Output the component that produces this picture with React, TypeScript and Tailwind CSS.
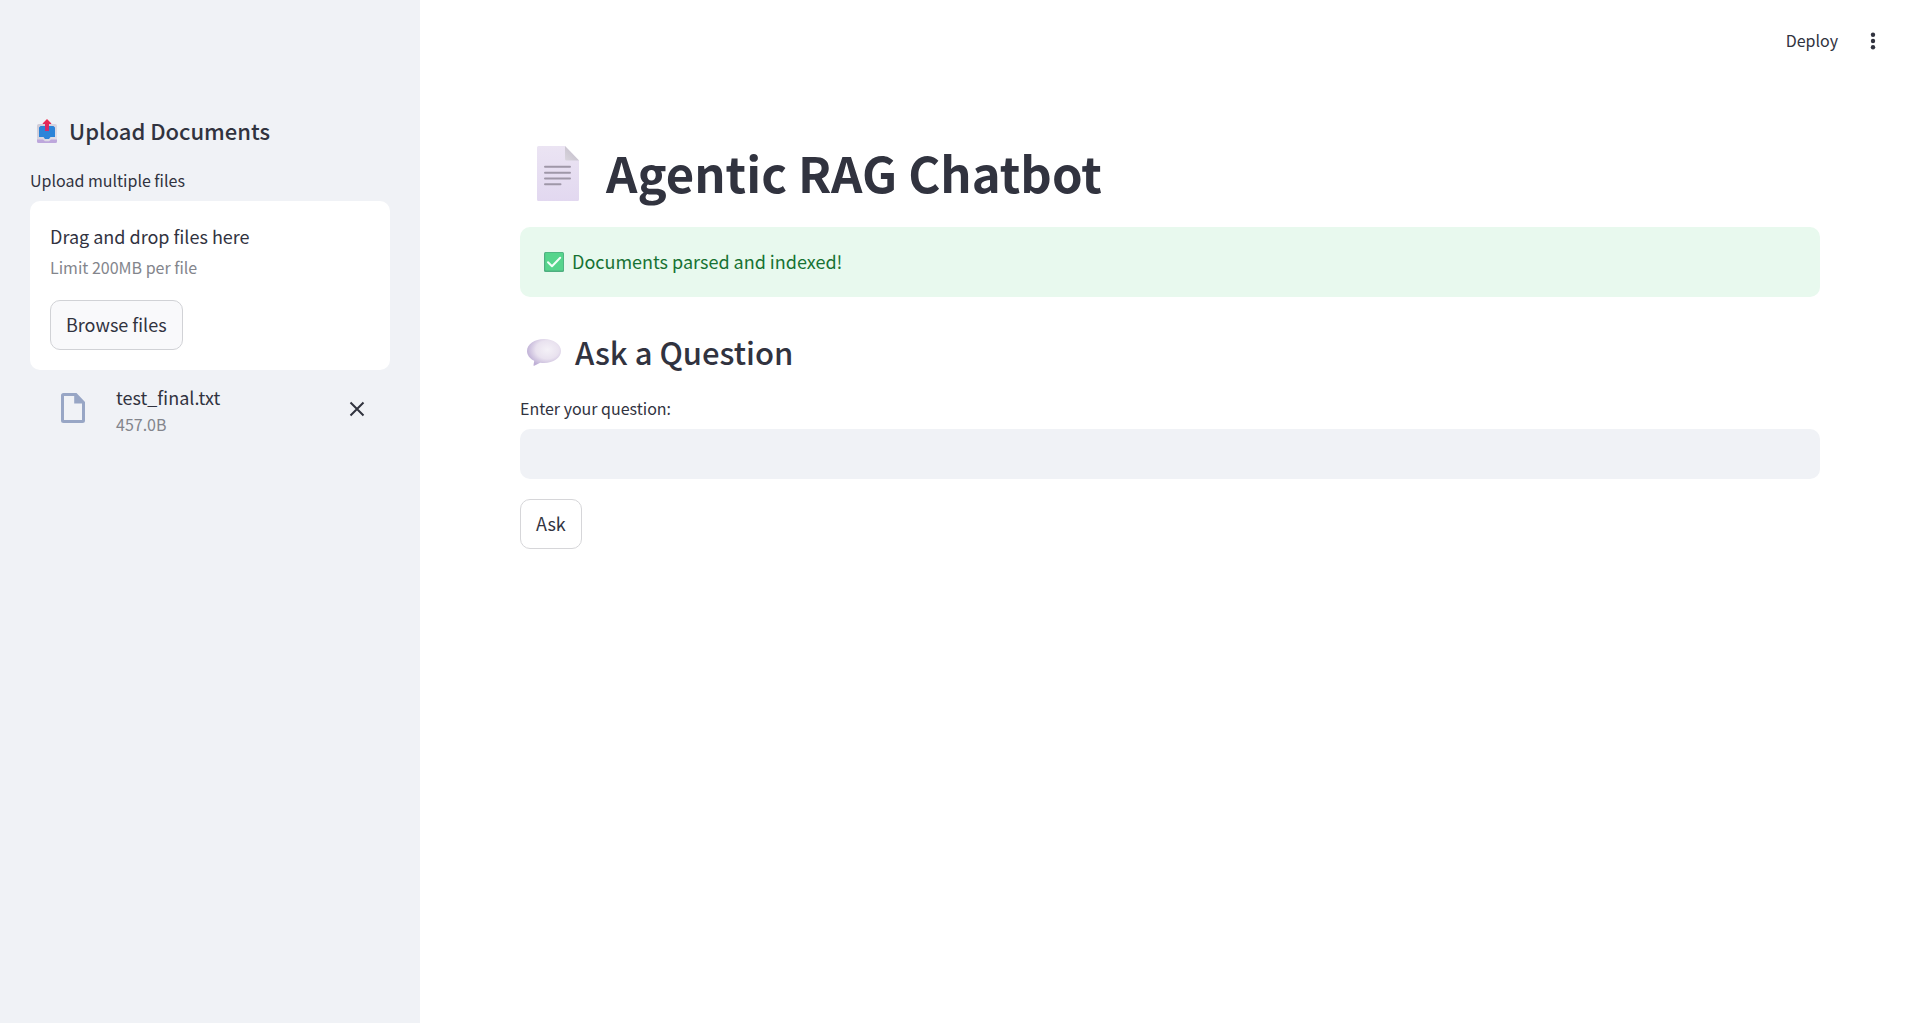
function OutboxIcon() {
  return (
    <svg className="h-6 w-5 shrink-0" viewBox="0 0 20 24" aria-hidden="true">
      <defs>
        <linearGradient id="tray" x1="0" x2="1" y1="0" y2="1">
          <stop offset="0" stopColor="#cdcad6" />
          <stop offset="1" stopColor="#e4e1ea" />
        </linearGradient>
        <linearGradient id="arrow" x1="0" x2="0" y1="0" y2="1">
          <stop offset="0" stopColor="#f02a4a" />
          <stop offset="1" stopColor="#cf2a70" />
        </linearGradient>
      </defs>
      <rect x="0" y="5" width="20" height="18.500" rx="1.800" fill="url(#tray)" />
      <path d="M0 20.500h6l2 1.800h4l2-1.800h6v2a1.500 1.500 0 0 1-1.500 1.500h-17A1.500 1.500 0 0 1 0 22.500z" fill="#bda7dc" />
      <path d="M3.500 7h13L18 8.500V18h-4.500l-1.500 2H8l-1.500-2H2V8.500z" fill="#2c84d8" />
      <path d="M10 0l4.200 4.300c.3.400.1.800-.4.800H12V12H8V5.100H6.200c-.5 0-.7-.4-.4-.8z" fill="url(#arrow)" />
    </svg>
  );
}

function PageIcon() {
  return (
    <svg className="h-[55px] w-[42px] shrink-0" viewBox="0 0 42 55" aria-hidden="true">
      <defs>
        <linearGradient id="page" x1="0" x2="0" y1="0" y2="1">
          <stop offset="0" stopColor="#ebe4f3" />
          <stop offset="1" stopColor="#e2d8f0" />
        </linearGradient>
        <linearGradient id="fold" x1="0" x2="1" y1="1" y2="0">
          <stop offset="0" stopColor="#dad6de" />
          <stop offset="1" stopColor="#bdb7c5" />
        </linearGradient>
      </defs>
      <path d="M1.500 0H28l14 14.500v39a1.500 1.500 0 0 1-1.500 1.500h-39A1.500 1.500 0 0 1 0 53.500v-52A1.500 1.500 0 0 1 1.500 0z" fill="url(#page)" />
      <path d="M28 0v13a1.500 1.500 0 0 0 1.500 1.500H42z" fill="url(#fold)" />
      <path d="M8 20.700h25M8 26.700h25M8 32.500h25M8 38.300h15.500" stroke="#9f97a8" strokeWidth="2" strokeLinecap="round" />
    </svg>
  );
}

function CheckIcon() {
  return (
    <svg className="size-5 shrink-0" viewBox="0 0 20 20" aria-hidden="true">
      <rect width="20" height="20" rx="1.500" fill="#4fae80" />
      <rect x="1.200" y="0.800" width="18" height="17.700" rx="1" fill="#56d58c" />
      <path d="M4 10.200l4 4 8.200-8.400" fill="none" stroke="#f2fff8" strokeWidth="2" strokeLinecap="round" strokeLinejoin="round" />
    </svg>
  );
}

function SpeechIcon() {
  return (
    <svg className="h-[27px] w-[34px] shrink-0" viewBox="0 0 34 27" aria-hidden="true">
      <defs>
        <radialGradient id="bubble" cx="0.6" cy="0.4" r="0.62">
          <stop offset="0" stopColor="#f4f1f7" />
          <stop offset="0.55" stopColor="#e9e2ef" />
          <stop offset="1" stopColor="#bfb0d6" />
        </radialGradient>
      </defs>
      <path d="M17 0C26.400 0 34 5.400 34 12S26.400 24 17 24c-1.300 0-2.600-.1-3.800-.3L7.300 26.800c-.5.200-.9-.1-.8-.6L7.200 21.800C2.900 19.700 0 16.100 0 12 0 5.400 7.600 0 17 0z" fill="url(#bubble)" />
    </svg>
  );
}

function FileIcon() {
  return (
    <svg className="mt-[9px] h-[30px] w-6 shrink-0" viewBox="0 0 24 30" aria-hidden="true">
      <path
        d="M2.500 0H15.500L24 9v18.500a2.500 2.500 0 0 1-2.500 2.500h-19A2.500 2.500 0 0 1 0 27.500v-25A2.500 2.500 0 0 1 2.500 0zM3 3v24h18V10.500h-7.800V3z"
        fill="#98a6c5"
        fillRule="evenodd"
      />
    </svg>
  );
}

export default function App() {
  return (
    <div className="flex min-h-screen bg-white font-['Noto_Sans_CJK_SC',sans-serif] text-lg text-[#31333f]">
      <aside className="w-[420px] shrink-0 bg-[#f0f2f6] px-[30px] pt-[116px]">
        <h2 className="flex h-[30px] items-center gap-3 pl-[7px] text-[22px] leading-[30px] font-medium">
          <OutboxIcon />
          <span className="pb-0.5">Upload Documents</span>
        </h2>
        <label htmlFor="files" className="mt-[21px] block text-base leading-[26px]">
          Upload multiple files
        </label>
        <section className="mt-2 rounded-[10px] bg-white px-5 pt-[19px] pb-5">
          <p className="leading-8">Drag and drop files here</p>
          <p className="text-base leading-[30px] text-[#83858c]">Limit 200MB per file</p>
          <input id="files" type="file" multiple className="hidden" />
          <button className="mt-[18px] h-[50px] rounded-[10px] border border-[#d1d2d6] bg-[#f9f9fb] px-[15px] pb-0.5">
            Browse files
          </button>
        </section>
        <div className="mt-[14px] flex items-start pr-[25px] pl-[31px]">
          <FileIcon />
          <div className="ml-[31px] flex-1">
            <p className="leading-[26px]">test_final.txt</p>
            <p className="text-base leading-7 text-[#83858c]">457.0B</p>
          </div>
          <button aria-label="Remove test_final.txt" className="mt-[17px]">
            <svg className="size-4" viewBox="0 0 16 16" aria-hidden="true">
              <path d="M1.500 1.500l13 13M14.500 1.500l-13 13" stroke="#31333f" strokeWidth="2" />
            </svg>
          </button>
        </div>
      </aside>

      <div className="min-w-0 flex-1">
        <header className="flex h-[82px] items-center justify-end gap-8 pr-[43px]">
          <button className="pb-0.5 text-base">Deploy</button>
          <button aria-label="Main menu">
            <svg className="h-[18px] w-1.5" viewBox="0 0 6 18" fill="#31333f" aria-hidden="true">
              <circle cx="3" cy="2.800" r="2.200" />
              <circle cx="3" cy="9" r="2.200" />
              <circle cx="3" cy="15.200" r="2.200" />
            </svg>
          </button>
        </header>
        <main className="pt-[59px] pr-[99px] pl-[100px]">
          <h1 className="flex h-16 items-center gap-[27px] pl-[17px] text-[49px] leading-[64px] font-bold">
            <PageIcon />
            <span className="pb-0.5">Agentic RAG Chatbot</span>
          </h1>
          <div
            role="status"
            className="mt-[22px] flex h-[70px] items-center gap-2 rounded-[10px] bg-[#e8f9ee] px-6 text-[#177233]"
          >
            <CheckIcon />
            <span className="pb-0.5">Documents parsed and indexed!</span>
          </div>
          <h2 className="mt-[31px] flex h-12 items-center gap-[14px] pl-[7px] text-[31px] leading-[48px] font-medium">
            <SpeechIcon />
            Ask a Question
          </h2>
          <label htmlFor="question" className="mt-[19px] block text-base leading-[26px]">
            Enter your question:
          </label>
          <input
            id="question"
            type="text"
            className="mt-2 block h-[50px] w-full rounded-[10px] bg-[#f0f2f6] px-4 outline-none"
          />
          <button className="mt-5 h-[50px] rounded-[10px] border border-[#d6d6d9] bg-white px-[15px] pb-0.5">
            Ask
          </button>
        </main>
      </div>
    </div>
  );
}
